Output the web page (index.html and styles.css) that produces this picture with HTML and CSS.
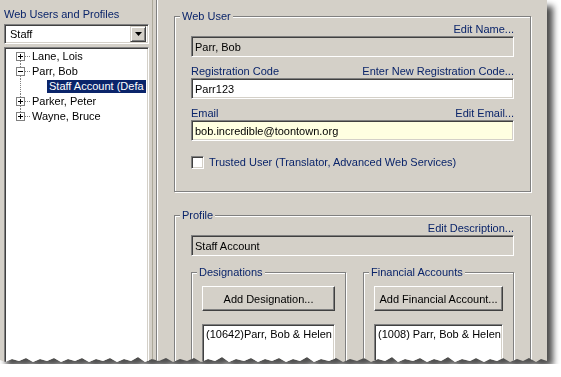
FILE: index.html
```html
<!DOCTYPE html>
<html lang="en">
<head>
    <meta charset="UTF-8">
    <meta name="viewport" content="width=device-width, initial-scale=1.0">
    <title>Web Users and Profiles</title>
    <link rel="stylesheet" href="styles.css">
</head>
<body>
    <div class="shot">
        <div class="window">
            <!-- Left pane: user tree -->
            <aside class="sidebar">
                <div class="sidebar-title">Web Users and Profiles</div>
                <div class="combo">
                    <span class="combo-text">Staff</span>
                    <span class="combo-button">
                        <svg width="7" height="4" viewBox="0 0 7 4"><path d="M0 0h7L3.5 4z" fill="#000"/></svg>
                    </span>
                </div>
                <ul class="tree">
                    <li class="node">
                        <svg class="twist" width="26" height="15" viewBox="0 0 26 15">
                            <path d="M14.5 12v3M19 7.5h6" class="dots"/>
                            <rect x="10.5" y="3.5" width="8" height="8" class="box"/>
                            <path d="M12 7.5h5M14.5 5v5" class="sign"/>
                        </svg>
                        <span class="node-text">Lane, Lois</span>
                    </li>
                    <li class="node">
                        <svg class="twist" width="26" height="15" viewBox="0 0 26 15">
                            <path d="M14.5 0v3M14.5 12v3M19 7.5h6" class="dots"/>
                            <rect x="10.5" y="3.5" width="8" height="8" class="box"/>
                            <path d="M12 7.5h5" class="sign"/>
                        </svg>
                        <span class="node-text">Parr, Bob</span>
                    </li>
                    <li class="node child">
                        <svg class="twist" width="26" height="15" viewBox="0 0 26 15">
                            <path d="M14.5 0v15" class="dots"/>
                        </svg>
                        <span class="node-text selected">Staff Account (Defa</span>
                    </li>
                    <li class="node">
                        <svg class="twist" width="26" height="15" viewBox="0 0 26 15">
                            <path d="M14.5 0v3M14.5 12v3M19 7.5h6" class="dots"/>
                            <rect x="10.5" y="3.5" width="8" height="8" class="box"/>
                            <path d="M12 7.5h5M14.5 5v5" class="sign"/>
                        </svg>
                        <span class="node-text">Parker, Peter</span>
                    </li>
                    <li class="node">
                        <svg class="twist" width="26" height="15" viewBox="0 0 26 15">
                            <path d="M14.5 0v3M19 7.5h6" class="dots"/>
                            <rect x="10.5" y="3.5" width="8" height="8" class="box"/>
                            <path d="M12 7.5h5M14.5 5v5" class="sign"/>
                        </svg>
                        <span class="node-text">Wayne, Bruce</span>
                    </li>
                </ul>
            </aside>

            <div class="splitter"></div>

            <!-- Right pane: details -->
            <main class="detail">
                <fieldset class="group">
                    <legend>Web User</legend>
                    <div class="group-body web-user">
                        <div class="field">
                            <div class="field-label"><span></span><span>Edit Name...</span></div>
                            <div class="textbox disabled">Parr, Bob</div>
                        </div>
                        <div class="field">
                            <div class="field-label"><span>Registration Code</span><span>Enter New Registration Code...</span></div>
                            <div class="textbox">Parr123</div>
                        </div>
                        <div class="field">
                            <div class="field-label"><span>Email</span><span>Edit Email...</span></div>
                            <div class="textbox info">bob.incredible@toontown.org</div>
                        </div>
                        <label class="check">
                            <span class="checkbox"></span>
                            Trusted User (Translator, Advanced Web Services)
                        </label>
                    </div>
                </fieldset>

                <fieldset class="group profile">
                    <legend>Profile</legend>
                    <div class="group-body">
                        <div class="field">
                            <div class="field-label"><span></span><span>Edit Description...</span></div>
                            <div class="textbox disabled">Staff Account</div>
                        </div>
                        <div class="subgroups">
                            <fieldset class="group designations">
                                <legend>Designations</legend>
                                <div class="subgroup-body">
                                    <button class="button">Add Designation...</button>
                                    <div class="listbox">(10642)Parr, Bob &amp; Helen</div>
                                </div>
                            </fieldset>
                            <fieldset class="group accounts">
                                <legend>Financial Accounts</legend>
                                <div class="subgroup-body">
                                    <button class="button">Add Financial Account...</button>
                                    <div class="listbox">(1008) Parr, Bob &amp; Helen</div>
                                </div>
                            </fieldset>
                        </div>
                    </div>
                </fieldset>
            </main>
        </div>
    </div>
</body>
</html>
```

FILE: styles.css
```css
body {
    margin: 0;
    padding: 0;
    background: #fff;
    font-family: "Liberation Sans", Arial, sans-serif;
    font-size: 11px;
    color: #000;
}

/* screenshot frame: torn bottom edge + drop shadow */
.shot {
    width: 547px;
    filter: drop-shadow(6px 6px 3px rgba(0,0,0,0.7));
}

.window {
    display: flex;
    height: 364px;
    overflow: hidden;
    background-color: #d4d0c8;
    clip-path: polygon(0 0, 547px 0, 547px 361px, 541px 359px, 536px 362px, 529px 358px, 523px 361px, 517px 359px, 510px 362px, 503px 358px, 497px 361px, 490px 359px, 484px 362px, 476px 358px, 470px 361px, 462px 359px, 455px 362px, 448px 357px, 441px 361px, 434px 359px, 427px 362px, 420px 358px, 413px 361px, 405px 359px, 398px 362px, 392px 357px, 385px 361px, 378px 359px, 371px 362px, 364px 358px, 357px 361px, 350px 359px, 343px 362px, 336px 358px, 329px 361px, 321px 359px, 314px 362px, 307px 357px, 300px 361px, 293px 359px, 286px 362px, 279px 358px, 272px 361px, 265px 359px, 258px 362px, 251px 358px, 244px 361px, 236px 359px, 229px 362px, 222px 357px, 215px 361px, 208px 359px, 201px 362px, 194px 358px, 187px 361px, 180px 359px, 173px 362px, 166px 358px, 159px 361px, 152px 359px, 145px 362px, 138px 357px, 131px 361px, 124px 359px, 117px 362px, 110px 358px, 103px 361px, 96px 359px, 89px 362px, 82px 358px, 75px 361px, 68px 359px, 61px 362px, 54px 358px, 47px 361px, 40px 359px, 33px 362px, 26px 358px, 19px 361px, 12px 359px, 5px 362px, 0 360px);
}

/* left pane */
.sidebar {
    width: 145px;
    padding: 7px 3px 0 4px;
    display: flex;
    flex-direction: column;
    flex: none;
}

.sidebar-title {
    color: #0a246a;
    line-height: 14px;
}

.combo {
    margin-top: 3px;
    height: 20px;
    box-sizing: border-box;
    display: flex;
    align-items: center;
    justify-content: space-between;
    background: #fff;
    border: 1px solid;
    border-color: #808080 #fff #fff #808080;
    box-shadow: inset 1px 1px 0 #404040, inset -1px -1px 0 #d4d0c8;
    padding: 2px 2px 2px 5px;
}

.combo-button {
    width: 16px;
    height: 16px;
    box-sizing: border-box;
    display: flex;
    align-items: center;
    justify-content: center;
    background: #d4d0c8;
    border: 1px solid;
    border-color: #d4d0c8 #404040 #404040 #d4d0c8;
    box-shadow: inset 1px 1px 0 #fff, inset -1px -1px 0 #808080;
}

.tree {
    flex: 1;
    margin: 3px 0 0;
    padding: 1px 0 0 1px;
    list-style: none;
    background: #fff;
    overflow: hidden;
    border: 1px solid;
    border-color: #808080 #fff #fff #808080;
    box-shadow: inset 1px 1px 0 #404040, inset -1px -1px 0 #d4d0c8;
}

.node {
    display: flex;
    align-items: center;
    height: 15px;
    white-space: nowrap;
}

.twist {
    flex: none;
    display: block;
}

.twist .dots {
    stroke: #808080;
    stroke-dasharray: 1 1;
    fill: none;
}

.twist .box {
    fill: #fff;
    stroke: #808080;
}

.twist .sign {
    stroke: #000;
}

.node-text {
    flex: none;
    line-height: 13px;
}

.node.child .node-text {
    margin-left: 15px;
}

.selected {
    background-color: #0a246a;
    color: #fff;
    padding: 0 2px;
}

.splitter {
    flex: none;
    width: 3px;
    border-left: 1px solid #aca899;
    border-right: 1px solid #808080;
    box-shadow: 1px 0 0 #fff;
    margin-right: 1px;
}

/* right pane */
.detail {
    flex: none;
    width: 357px;
    padding: 10px 16px 0;
}

.group {
    margin: 0;
    padding: 0;
    min-width: 0;
    border: 1px solid #808080;
    box-shadow: inset 1px 1px 0 #fff, 1px 1px 0 #fff;
}

.group legend {
    margin-left: 5px;
    padding: 0 2px;
    line-height: 12px;
    color: #0a246a;
    background-color: #d4d0c8;
}

.group-body {
    padding: 0 16px;
}

.group-body.web-user {
    padding-bottom: 22px;
}

.profile {
    margin-top: 17px;
}

.field + .field {
    margin-top: 7px;
}

.field-label {
    display: flex;
    justify-content: space-between;
    line-height: 14px;
    color: #0a246a;
}

.textbox {
    height: 21px;
    box-sizing: border-box;
    display: flex;
    align-items: center;
    padding: 0 3px;
    background: #fff;
    border: 1px solid;
    border-color: #808080 #fff #fff #808080;
    box-shadow: inset 1px 1px 0 #404040, inset -1px -1px 0 #d4d0c8;
    white-space: nowrap;
}

.textbox.disabled {
    background: #d4d0c8;
}

.textbox.info {
    background: #ffffe1;
}

.check {
    display: flex;
    align-items: center;
    gap: 5px;
    margin-top: 15px;
    line-height: 13px;
    color: #0a246a;
}

.checkbox {
    width: 13px;
    height: 13px;
    box-sizing: border-box;
    background: #fff;
    border: 1px solid;
    border-color: #808080 #fff #fff #808080;
    box-shadow: inset 1px 1px 0 #404040, inset -1px -1px 0 #d4d0c8;
}

.subgroups {
    display: flex;
    justify-content: space-between;
    margin-top: 10px;
}

.designations {
    width: 153px;
}

.accounts {
    width: 149px;
}

.subgroup-body {
    padding: 8px 10px 0;
    display: flex;
    flex-direction: column;
}

.button {
    height: 25px;
    font: inherit;
    color: #000;
    background: #d4d0c8;
    border: 1px solid;
    border-color: #fff #404040 #404040 #fff;
    box-shadow: inset -1px -1px 0 #808080;
    padding: 0;
}

.listbox {
    margin-top: 13px;
    height: 60px;
    padding: 2px 3px;
    background: #fff;
    border: 1px solid;
    border-color: #808080 #fff #fff #808080;
    box-shadow: inset 1px 1px 0 #404040, inset -1px -1px 0 #d4d0c8;
    white-space: nowrap;
    line-height: 14px;
}
```
